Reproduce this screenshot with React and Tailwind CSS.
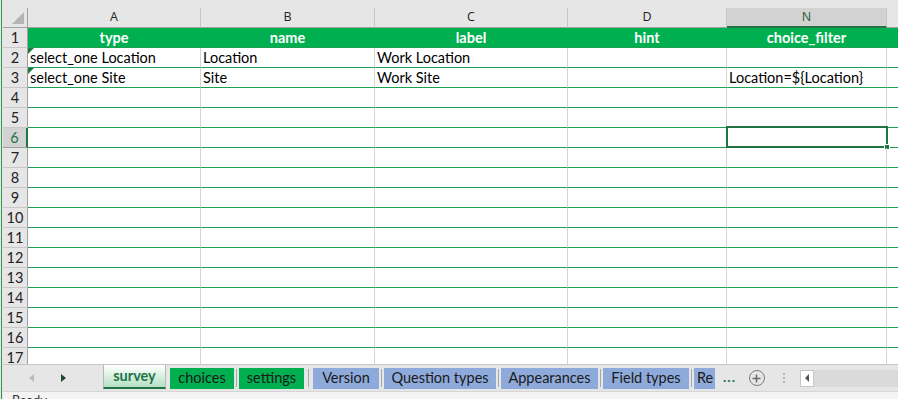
import React from "react";

const cols = [
  { key: "A", w: 173 },
  { key: "B", w: 174 },
  { key: "C", w: 193 },
  { key: "D", w: 159 },
  { key: "N", w: 160 },
];

const data = {
  1: ["type", "name", "label", "hint", "choice_filter"],
  2: ["select_one Location", "Location", "Work Location", "", ""],
  3: ["select_one Site", "Site", "Work Site", "", "Location=${Location}"],
};

function Row({ n }) {
  const isHeader = n === 1;
  const sel = n === 6;
  const vals = data[n] || ["", "", "", "", ""];
  return (
    <div className={"flex h-[20px] shrink-0 " + (isHeader ? "bg-[#00b050]" : "bg-white")}>
      <div
        className={
          "w-[25px] shrink-0 flex items-center justify-center text-[14.5px] pt-[1px] border-b " +
          (sel
            ? "bg-[#d2d2d2] text-[#217346] border-r-2 border-r-[#217346] border-b-[#9e9e9e]"
            : "bg-[#e6e6e6] text-[#222] border-r border-r-[#a0a0a0] border-b-[#c8c8c8]")
        }
      >
        {n}
      </div>
      {cols.map((c, i) => (
        <div
          key={c.key}
          style={{ width: c.w }}
          className={
            "shrink-0 relative flex items-center pt-[2px] border-b border-b-[#1aa050] text-[14.5px] leading-none whitespace-nowrap overflow-visible " +
            (isHeader
              ? "justify-center font-bold text-white border-r border-r-[#00b050]"
              : "px-[2px] text-black border-r border-r-[#d4d4d4]") +
            (sel && i === 3 ? " border-r-[#217346]" : "")
          }
        >
          {(n === 2 || n === 3) && i === 0 && (
            <div className="absolute left-0 top-0 w-0 h-0 border-t-[6px] border-t-[#1e7a3e] border-r-[6px] border-r-transparent" />
          )}
          {vals[i]}
          {sel && i === 4 && (
            <>
              <div className="absolute left-[-1px] top-[-2px] w-[162px] h-[22px] border-2 border-[#217346] pointer-events-none" />
              <div className="absolute right-[-4px] bottom-[-3px] w-[6px] h-[6px] bg-[#217346] border border-white" />
            </>
          )}
        </div>
      ))}
      <div className="flex-1 border-b border-b-[#1aa050]" />
    </div>
  );
}

function Tab({ label, w, kind }) {
  if (kind === "active") {
    return (
      <div
        style={{ width: w }}
        className="h-[24px] self-start flex items-center justify-center font-bold text-[14.5px] text-[#217346] bg-gradient-to-b from-white to-[#b4e0c4] border-x border-[#b8b8b8] border-b-2 border-b-[#217346]"
      >
        {label}
      </div>
    );
  }
  const bg = kind === "green" ? "bg-[#00b050]" : "bg-[#8eaadb]";
  return (
    <div
      style={{ width: w }}
      className={"h-[21px] flex items-center justify-center text-[14.5px] text-[#1a1a1a] overflow-hidden whitespace-nowrap " + bg}
    >
      {label}
    </div>
  );
}

function Sep() {
  return <div className="w-[1px] h-[18px] bg-[#a8a8a8] mx-[2px]" />;
}

export default function App() {
  const rows = Array.from({ length: 17 }, (_, i) => i + 1);
  return (
    <div
      className="w-[898px] h-[399px] overflow-hidden bg-white flex"
      style={{ fontFamily: "Lato, 'Open Sans', sans-serif" }}
    >
      {/* left strip */}
      <div className="w-[3px] shrink-0 bg-[#e6e6e6] flex">
        <div className="w-[1px]" />
        <div className="w-[1px] bg-[#2f9a4f]" />
      </div>
      <div className="flex-1 flex flex-col min-w-0">
        {/* sheet */}
        <div className="h-[364px] shrink-0 overflow-hidden flex flex-col">
          <div className="h-[8px] bg-[#e6e6e6] shrink-0" />
          {/* column header */}
          <div className="flex h-[20px] shrink-0 bg-[#e6e6e6]" style={{ fontFamily: "'Open Sans', sans-serif" }}>
            <div className="w-[25px] shrink-0 relative border-r border-r-[#a0a0a0] border-b border-b-[#a0a0a0]">
              <div className="absolute right-[3px] bottom-[3px] w-0 h-0 border-l-[12px] border-l-transparent border-b-[12px] border-b-[#b4b4b4]" />
            </div>
            {cols.map((c) => (
              <div
                key={c.key}
                style={{ width: c.w }}
                className={
                  "shrink-0 flex items-center justify-center text-[12.5px] border-r border-r-[#c6c6c6] " +
                  (c.key === "N"
                    ? "bg-[#d2d2d2] text-[#1d5a36] border-b-2 border-b-[#217346]"
                    : "text-[#222] border-b border-b-[#a0a0a0]")
                }
              >
                {c.key}
              </div>
            ))}
            <div className="flex-1 border-b border-b-[#a0a0a0]" />
          </div>
          {rows.map((n) => (
            <Row key={n} n={n} />
          ))}
        </div>
        {/* tab bar */}
        <div className="h-[27px] shrink-0 bg-[#e6e6e6] border-t border-[#c6c6c6] flex items-center relative">
          <div className="w-[100px] shrink-0 flex items-center h-full">
            <div className="ml-[26px] w-0 h-0 border-y-[4px] border-y-transparent border-r-[5px] border-r-[#bdbdbd]" />
            <div className="ml-[27px] w-0 h-0 border-y-[4px] border-y-transparent border-l-[5px] border-l-[#1e4b2e]" />
          </div>
          <div className="flex items-center h-full">
            <Tab label="survey" w={63} kind="active" />
            <div className="w-[4px]" />
            <Tab label="choices" w={64} kind="green" />
            <Sep />
            <Tab label="settings" w={65} kind="green" />
            <div className="w-[2px]" />
            <Sep />
            <div className="w-[2px]" />
            <Tab label="Version" w={66} kind="blue" />
            <Sep />
            <Tab label="Question types" w={112} kind="blue" />
            <Sep />
            <Tab label="Appearances" w={97} kind="blue" />
            <Sep />
            <Tab label="Field types" w={86} kind="blue" />
            <Sep />
            <div className="w-[21px] h-[21px] bg-[#8eaadb] overflow-hidden text-[14.5px] text-[#1a1a1a] flex items-center pl-[3px] whitespace-nowrap">
              Re
            </div>
            <div className="ml-[8px] text-[#217346] font-bold text-[14px] leading-none tracking-[1px] -mt-[2px]">...</div>
            <div className="ml-[13px] w-[16px] h-[16px] rounded-full border-[1.5px] border-[#7a7a7a] flex items-center justify-center">
              <svg width="9" height="9" viewBox="0 0 9 9">
                <path d="M4.5 0.5v8M0.5 4.5h8" stroke="#6a6a6a" strokeWidth="1.5" />
              </svg>
            </div>
            <div className="ml-[18px] flex flex-col gap-[2px]">
              <div className="w-[2px] h-[2px] bg-[#b8b8b8]" />
              <div className="w-[2px] h-[2px] bg-[#b8b8b8]" />
              <div className="w-[2px] h-[2px] bg-[#b8b8b8]" />
            </div>
            <div className="ml-[15px] flex items-center h-[17px]">
              <div className="w-[14px] h-[17px] bg-white border border-[#c6c6c6] flex items-center justify-center">
                <div className="w-0 h-0 border-y-[4px] border-y-transparent border-r-[4px] border-r-[#555]" />
              </div>
              <div className="w-[90px] h-[17px] bg-[#dadada]" />
            </div>
          </div>
        </div>
        {/* status bar */}
        <div className="flex-1 bg-[#f3f3f3] border-t border-[#d6d6d6] relative overflow-hidden">
          <div className="absolute left-[9px] top-[2px] text-[13px] text-[#333] leading-none">Ready</div>
        </div>
      </div>
    </div>
  );
}
